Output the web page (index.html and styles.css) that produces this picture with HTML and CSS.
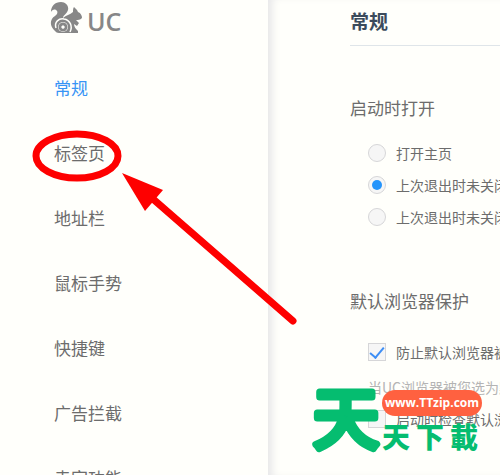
FILE: index.html
```html
<!DOCTYPE html>
<html lang="zh-CN">
  <head>
    <meta charset="UTF-8" />
    <title>UC 设置</title>
    <link rel="stylesheet" href="styles.css">
  </head>
  <body>
    <div class="page">
      <aside class="sidebar">
        <div class="logo">
          <svg width="34" height="34" viewBox="0 0 34 34">
            <path fill="#878787" d="M5 30C-1 25 0 18 5 15C8 13 8 10 6 9C4 8 2 9 1 11C1 5 5 1 11 1C16 1 19 5 18 9C17 13 13 14 13 17C16 14 20 14 23 11C23 9 23 7 24 6L27 9L28 11C31 12 32 15 32 17C30 19 28 19 26 19L29 22L27 25L24 23C24 26 26 28 28 30V32H9C7 32 6 31 5 30Z" />
            <path fill="none" stroke="#fffffb" stroke-width="1.5" d="M6 27C4 21 9 17 14 18C20 19 23 25 20 31" />
            <circle cx="13" cy="26" r="5" fill="#fffffb" />
            <circle cx="13" cy="26" r="3" fill="none" stroke="#878787" stroke-width="3" />
            <circle cx="13" cy="26" r="1.500" fill="#fffffb" />
          </svg>
          <span>UC</span>
        </div>
        <nav class="menu">
          <a href="#general" class="active">常规</a>
          <a href="#tabs">标签页</a>
          <a href="#address">地址栏</a>
          <a href="#mouse">鼠标手势</a>
          <a href="#keys">快捷键</a>
          <a href="#adblock">广告拦截</a>
          <a href="#seller">卖家功能</a>
        </nav>
      </aside>

      <main class="content" id="general">
        <h1>常规</h1>

        <section>
          <h2>启动时打开</h2>
          <label class="option"><input type="radio" name="startup" /><span>打开主页</span></label>
          <label class="option"><input type="radio" name="startup" checked /><span>上次退出时未关闭的页面</span></label>
          <label class="option"><input type="radio" name="startup" /><span>上次退出时未关闭的页面和主页</span></label>
        </section>

        <section>
          <h2>默认浏览器保护</h2>
          <label class="option"><input type="checkbox" checked /><span>防止默认浏览器被篡改</span></label>
          <p class="hint">当UC浏览器被您选为默认浏览器</p>
          <label class="option"><input type="checkbox" /><span>启动时检查默认浏览器</span></label>
        </section>
      </main>
    </div>

    <svg class="marker" width="300" height="330" viewBox="0 0 300 330">
      <ellipse cx="77" cy="156" rx="41" ry="22" fill="none" stroke="#fe0000" stroke-width="7" />
      <path d="M153 199L293 321" stroke="#fe0000" stroke-width="7" stroke-linecap="round" />
      <path d="M122 173L163 190L145 211Z" fill="#fe0000" />
    </svg>

    <div class="watermark">
      <svg class="big" width="71" height="76" viewBox="0 0 71 76">
        <text x="2" y="61">天</text>
      </svg>
      <div class="side">
        <span class="site">www.TTzip.com</span>
        <div class="small"><span>天</span><span>下</span><span>載</span></div>
      </div>
    </div>
  </body>
</html>
```
FILE: styles.css
```css
* {
  box-sizing: border-box;
}

body {
  margin: 0;
  height: 100vh;
  overflow: hidden;
  background-color: #fffffb;
  color: #6c6c6c;
  font-family: "Noto Sans CJK SC", sans-serif;
}

.page {
  display: flex;
  height: 100%;
}

.sidebar {
  flex: none;
  width: 268px;
  padding-left: 50px;
}

.logo {
  display: flex;
  align-items: center;
  gap: 3px;
  height: 40px;
  padding-bottom: 4px;
  color: #878787;
  font-family: "Open Sans", sans-serif;
  font-size: 25px;
  font-weight: 600;
}

.logo span {
  padding-top: 6px;
}

.menu {
  display: flex;
  flex-direction: column;
  padding: 15px 0 0 4px;
}

.menu a {
  flex: none;
  height: 65px;
  line-height: 65px;
  font-size: 17px;
  color: #6c6c6c;
  text-decoration: none;
}

.menu a.active {
  color: #3794f5;
}

.content {
  flex: 1;
  min-width: 0;
  padding-left: 82px;
  overflow: hidden;
  white-space: nowrap;
  box-shadow: inset 8px 0 8px -4px #e6e6e8;
}

h1 {
  margin: 0;
  height: 46px;
  line-height: 42px;
  border-bottom: 1px solid #dfe5e9;
  font-size: 19px;
  font-weight: 700;
  color: #3b4b5c;
}

section {
  padding-top: 46px;
}

section + section {
  padding-top: 52px;
}

h2 {
  margin: 0 0 13px;
  height: 32px;
  line-height: 32px;
  font-size: 17px;
  font-weight: 400;
}

section + section h2 {
  margin-bottom: 19px;
}

.option {
  display: flex;
  align-items: center;
  gap: 10px;
  height: 32px;
  padding-left: 18px;
  font-size: 14px;
}

.option input {
  appearance: none;
  display: flex;
  align-items: center;
  justify-content: center;
  flex: none;
  width: 18px;
  height: 18px;
  margin: 0;
  border: 1px solid #d6d6d8;
  background-color: #f6f6f6;
}

.option input[type="radio"] {
  border-radius: 50%;
}

.option input[type="radio"]:checked::before {
  content: "";
  width: 10px;
  height: 10px;
  border-radius: 50%;
  background-color: #2494fb;
}

.option input[type="checkbox"]:checked::before {
  content: "";
  width: 6px;
  height: 12px;
  margin-bottom: 2px;
  border: solid #3d8ef5;
  border-width: 0 2px 2px 0;
  transform: rotate(40deg);
}

.hint {
  margin: 0;
  padding: 3px 0 0 18px;
  height: 35px;
  line-height: 32px;
  font-size: 14px;
  color: #b4b4b4;
}

.marker {
  position: absolute;
  top: 0;
  left: 0;
}

.watermark {
  position: absolute;
  left: 311px;
  bottom: 17px;
  display: flex;
  color: #05bd70;
}

.big text {
  fill: #05bd70;
  stroke: #05bd70;
  stroke-width: 7px;
  stroke-linejoin: round;
  font-size: 66px;
  font-weight: 400;
}

.side {
  display: flex;
  flex-direction: column;
}

.site {
  width: 100px;
  height: 26px;
  line-height: 26px;
  margin-top: 8px;
  border-radius: 13px;
  background-color: #ff6140;
  color: #fff;
  font-family: "Open Sans", sans-serif;
  font-size: 12px;
  font-weight: 700;
  text-align: center;
}

.small {
  display: flex;
  gap: 6px;
  line-height: 40px;
  font-size: 28px;
  font-weight: 900;
}
```
